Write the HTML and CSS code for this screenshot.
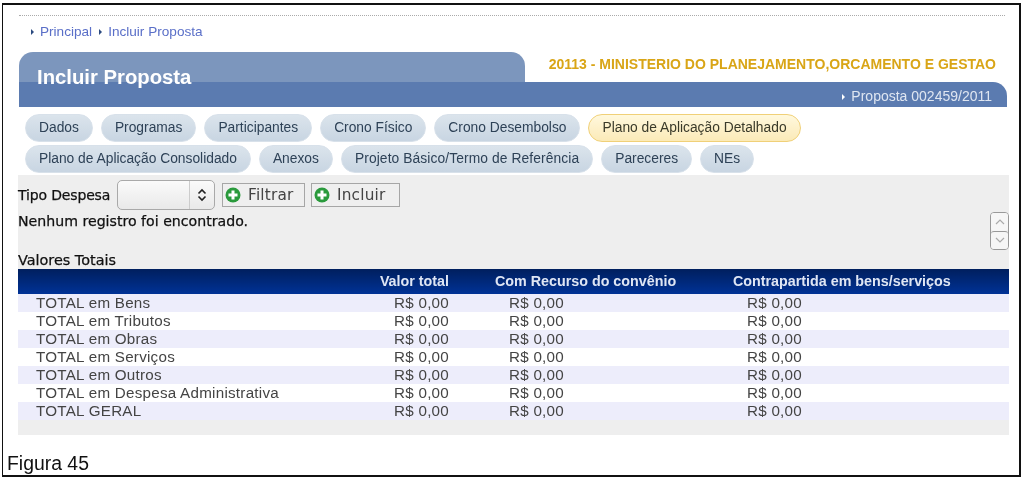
FILE: index.html
```html
<!DOCTYPE html>
<html lang="en">
<head>
    <meta charset="UTF-8">
    <meta name="viewport" content="width=device-width, initial-scale=1.0">
    <title>Incluir Proposta</title>
    <link rel="stylesheet" href="styles.css">
</head>
<body>
    <div class="frame">
        <div class="page">
            <div class="crumbs">
                <a class="crumb">Principal</a>
                <a class="crumb">Incluir Proposta</a>
            </div>

            <div class="head">
                <h1 class="head-tab">Incluir Proposta</h1>
                <div class="head-side">
                    <div class="org">20113 - MINISTERIO DO PLANEJAMENTO,ORCAMENTO E GESTAO</div>
                    <div class="head-bar"><span class="crumb-white">Proposta 002459/2011</span></div>
                </div>
            </div>

            <div class="tabs">
                <a class="tab">Dados</a>
                <a class="tab">Programas</a>
                <a class="tab">Participantes</a>
                <a class="tab">Crono Físico</a>
                <a class="tab">Crono Desembolso</a>
                <a class="tab active">Plano de Aplicação Detalhado</a>
                <a class="tab">Plano de Aplicação Consolidado</a>
                <a class="tab">Anexos</a>
                <a class="tab tab-wide">Projeto Básico/Termo de Referência</a>
                <a class="tab">Pareceres</a>
                <a class="tab">NEs</a>
            </div>

            <div class="panel">
                <div class="filter-row">
                    <span class="filter-label">Tipo Despesa</span>
                    <div class="select">
                        <span class="select-arrows">
                            <svg width="10" height="16" viewBox="0 0 10 16"><path d="M1.5 6.5l3.5-3.5 3.5 3.5M1.5 9.5l3.5 3.5 3.5-3.5" fill="none" stroke="#222" stroke-width="1.6"/></svg>
                        </span>
                    </div>
                    <button class="btn btn-filter">
                        <svg width="16" height="16" viewBox="0 0 16 16"><circle cx="8" cy="8" r="7.5" fill="#2a9a3c"/><path d="M8 3.5v9M3.5 8h9" stroke="#fff" stroke-width="3"/></svg>
                        Filtrar
                    </button>
                    <button class="btn btn-add">
                        <svg width="16" height="16" viewBox="0 0 16 16"><circle cx="8" cy="8" r="7.5" fill="#2a9a3c"/><path d="M8 3.5v9M3.5 8h9" stroke="#fff" stroke-width="3"/></svg>
                        Incluir
                    </button>
                </div>

                <div class="message-row">
                    <span class="message">Nenhum registro foi encontrado.</span>
                    <div class="spin">
                        <span class="spin-btn"><svg width="10" height="6" viewBox="0 0 10 6"><path d="M1 5l4-4 4 4" fill="none" stroke="#aaa" stroke-width="1.2"/></svg></span>
                        <span class="spin-btn"><svg width="10" height="6" viewBox="0 0 10 6"><path d="M1 1l4 4 4-4" fill="none" stroke="#aaa" stroke-width="1.2"/></svg></span>
                    </div>
                </div>

                <div class="totals-title">Valores Totais</div>

                <table class="totals">
                    <thead>
                        <tr>
                            <th class="col-name"></th>
                            <th class="col-total">Valor total</th>
                            <th class="col-rec">Com Recurso do convênio</th>
                            <th class="col-cp">Contrapartida em bens/serviços</th>
                        </tr>
                    </thead>
                    <tbody>
                        <tr><td class="col-name">TOTAL em Bens</td><td class="col-total">R$ 0,00</td><td class="col-rec">R$ 0,00</td><td class="col-cp">R$ 0,00</td></tr>
                        <tr><td class="col-name">TOTAL em Tributos</td><td class="col-total">R$ 0,00</td><td class="col-rec">R$ 0,00</td><td class="col-cp">R$ 0,00</td></tr>
                        <tr><td class="col-name">TOTAL em Obras</td><td class="col-total">R$ 0,00</td><td class="col-rec">R$ 0,00</td><td class="col-cp">R$ 0,00</td></tr>
                        <tr><td class="col-name">TOTAL em Serviços</td><td class="col-total">R$ 0,00</td><td class="col-rec">R$ 0,00</td><td class="col-cp">R$ 0,00</td></tr>
                        <tr><td class="col-name">TOTAL em Outros</td><td class="col-total">R$ 0,00</td><td class="col-rec">R$ 0,00</td><td class="col-cp">R$ 0,00</td></tr>
                        <tr><td class="col-name">TOTAL em Despesa Administrativa</td><td class="col-total">R$ 0,00</td><td class="col-rec">R$ 0,00</td><td class="col-cp">R$ 0,00</td></tr>
                        <tr><td class="col-name">TOTAL GERAL</td><td class="col-total">R$ 0,00</td><td class="col-rec">R$ 0,00</td><td class="col-cp">R$ 0,00</td></tr>
                    </tbody>
                </table>
            </div>
        </div>
        <div class="caption">Figura 45</div>
    </div>
</body>
</html>
```

FILE: styles.css
```css
html, body {
    margin: 0;
    background: #fff;
}

body {
    font-family: 'Liberation Sans', Arial, sans-serif;
    color: #333;
    height: 479px;
    overflow: hidden;
}

.frame {
    margin: 3px 2px 0 2px;
    width: 1019px;
    height: 474px;
    box-sizing: border-box;
    border: 2px solid #111;
    border-left-width: 1.5px;
    display: flex;
    flex-direction: column;
    filter: blur(0.35px);
}

.page {
    margin-left: 16px;
    width: 986px;
    border-top: 1px dotted #aaa;
    margin-top: 10px;
    flex: 1;
}

/* breadcrumb */
.crumbs {
    display: flex;
    gap: 7px;
    padding: 8px 0 0 12px;
    height: 28px;
    font-size: 13.6px;
    line-height: 16px;
    color: #5a6fc8;
}

.crumb::before,
.crumb-white::before {
    content: "";
    display: inline-block;
    border-left: 3px solid #2b4a80;
    border-top: 3px solid transparent;
    border-bottom: 3px solid transparent;
    margin-right: 6px;
    vertical-align: 1px;
}

/* title */
.head {
    display: flex;
    height: 55px;
    width: 988px;
}

.head-tab {
    margin: 0;
    width: 506px;
    height: 55px;
    box-sizing: border-box;
    padding: 14px 0 0 18px;
    border-radius: 14px 14px 0 0;
    background: linear-gradient(#7c96bd 30px, #5b7bb0 30px);
    color: #fff;
    font-size: 20.3px;
    line-height: 22px;
    font-weight: bold;
}

.head-side {
    flex: 1;
    display: flex;
    flex-direction: column;
}

.org {
    height: 30px;
    text-align: right;
    padding: 4px 11px 0 0;
    box-sizing: border-box;
    font-size: 14px;
    line-height: 16px;
    font-weight: bold;
    color: #d9a516;
}

.head-bar {
    height: 25px;
    background: #5b7bb0;
    border-top-right-radius: 14px;
    text-align: right;
    padding: 6px 15px 0 0;
    box-sizing: border-box;
    font-size: 14px;
    line-height: 16px;
    color: #dfe6f1;
}

.crumb-white::before {
    border-left-color: #fff;
}

/* tabs */
.tabs {
    display: flex;
    flex-wrap: wrap;
    gap: 3px 8px;
    padding: 7px 190px 2px 6px;
}

.tab {
    height: 28px;
    box-sizing: border-box;
    padding: 0 13px;
    border: 1px solid #d8e1ea;
    border-radius: 14px;
    background: linear-gradient(#dbe4ec, #c8d5e2);
    font-size: 13.8px;
    line-height: 25px;
    color: #2e4257;
}

.tab-wide {
    letter-spacing: 0.1px;
}

.tab.active {
    background: linear-gradient(#fff8dd, #fbeab8);
    border-color: #f0d078;
    color: #3a3a2a;
}

/* panel */
.panel {
    background: #eeeeee;
    width: 991px;
    margin-left: -1px;
    padding-bottom: 15px;
    font-family: 'DejaVu Sans', sans-serif;
    font-size: 14px;
    color: #111;
}

.filter-label,
.message,
.totals-title {
    -webkit-text-stroke: 0.25px #111;
}

.filter-row {
    display: flex;
    align-items: center;
    height: 30px;
    padding-top: 5px;
}

.filter-label {
    width: 99px;
    letter-spacing: -0.15px;
}

.select {
    width: 98px;
    height: 30px;
    box-sizing: border-box;
    border: 1px solid #a9a9a9;
    border-radius: 5px;
    background: linear-gradient(#fafafa, #e9e9e9);
    display: flex;
    justify-content: flex-end;
}

.select-arrows {
    width: 24px;
    border-left: 1px solid #ccc;
    display: flex;
    align-items: center;
    justify-content: center;
}

.btn {
    display: flex;
    align-items: center;
    gap: 7px;
    height: 24px;
    box-sizing: border-box;
    border: 1px solid #a6a6a6;
    background: #efefef;
    padding: 0 4px 0 2px;
    margin: 0;
    font-family: 'DejaVu Sans', sans-serif;
    font-size: 15.3px;
    letter-spacing: 0.2px;
    color: #444;
}

.btn-filter {
    width: 83px;
    margin-left: 7px;
}

.btn-add {
    width: 89px;
    margin-left: 6px;
}

.message-row {
    display: flex;
    justify-content: space-between;
    height: 40px;
    padding-top: 2px;
    line-height: 16px;
}

.message {
    padding-top: 1px;
    font-size: 14.15px;
}

.spin {
    width: 19px;
    height: 38px;
    box-sizing: border-box;
    border: 1px solid #999;
    border-radius: 4px;
    display: flex;
    flex-direction: column;
}

.spin-btn {
    flex: 1;
    display: flex;
    align-items: center;
    justify-content: center;
    background: #f6f6f6;
    border-radius: 3px;
}

.spin-btn + .spin-btn {
    border-top: 1px solid #999;
}

.totals-title {
    height: 17px;
    line-height: 17px;
    font-size: 14.4px;
}

/* table */
.totals {
    width: 100%;
    table-layout: fixed;
    border-collapse: collapse;
    font-family: 'Liberation Sans', Arial, sans-serif;
}

.totals th,
.totals td {
    box-sizing: border-box;
    padding: 0;
}

.totals th {
    height: 25px;
    padding-bottom: 2px;
    background: linear-gradient(#001f5e, #003296);
    color: #dfe6f4;
    font-size: 14.3px;
    font-weight: bold;
    text-align: left;
}

.totals td {
    height: 18px;
    font-size: 15.2px;
    letter-spacing: 0.25px;
    line-height: 18px;
    background: #fff;
    color: #444;
}

.totals tbody tr:nth-child(odd) td {
    background: #ededfb;
}

.col-name {
    width: 352px;
}

.totals td.col-name {
    padding-left: 18px;
}

.col-total {
    width: 79px;
}

.totals .col-total {
    text-align: right;
}

.col-rec {
    width: 238px;
}

.totals th.col-rec,
.totals th.col-cp {
    padding-left: 46px;
}

.totals td.col-rec,
.totals td.col-cp {
    padding-left: 60px;
}

.caption {
    font-size: 19.4px;
    line-height: 22px;
    padding: 0 0 1px 4px;
    color: #111;
}
```
